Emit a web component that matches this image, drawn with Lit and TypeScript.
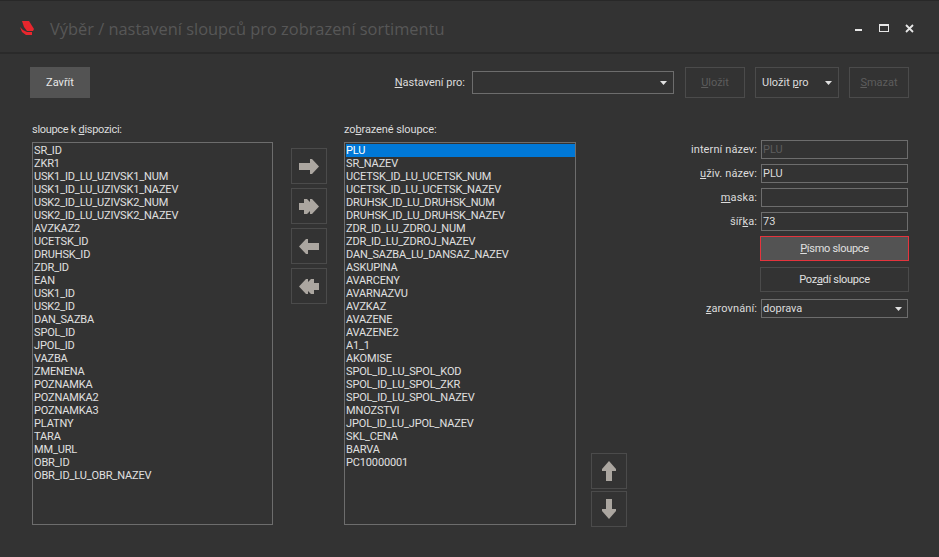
import { LitElement, html, css, svg } from "lit";
import { customElement } from "lit/decorators.js";

const LEFT = ["SR_ID","ZKR1","USK1_ID_LU_UZIVSK1_NUM","USK1_ID_LU_UZIVSK1_NAZEV","USK2_ID_LU_UZIVSK2_NUM","USK2_ID_LU_UZIVSK2_NAZEV","AVZKAZ2","UCETSK_ID","DRUHSK_ID","ZDR_ID","EAN","USK1_ID","USK2_ID","DAN_SAZBA","SPOL_ID","JPOL_ID","VAZBA","ZMENENA","POZNAMKA","POZNAMKA2","POZNAMKA3","PLATNY","TARA","MM_URL","OBR_ID","OBR_ID_LU_OBR_NAZEV"];
const RIGHT = ["PLU","SR_NAZEV","UCETSK_ID_LU_UCETSK_NUM","UCETSK_ID_LU_UCETSK_NAZEV","DRUHSK_ID_LU_DRUHSK_NUM","DRUHSK_ID_LU_DRUHSK_NAZEV","ZDR_ID_LU_ZDROJ_NUM","ZDR_ID_LU_ZDROJ_NAZEV","DAN_SAZBA_LU_DANSAZ_NAZEV","ASKUPINA","AVARCENY","AVARNAZVU","AVZKAZ","AVAZENE","AVAZENE2","A1_1","AKOMISE","SPOL_ID_LU_SPOL_KOD","SPOL_ID_LU_SPOL_ZKR","SPOL_ID_LU_SPOL_NAZEV","MNOZSTVI","JPOL_ID_LU_JPOL_NAZEV","SKL_CENA","BARVA","PC10000001"];

const icon = (w: number, h: number, pts: string[]) => html`<svg width=${w} height=${h} viewBox="0 0 ${w} ${h}">${pts.map((p) => svg`<polygon points=${p} fill="#aba6a0"></polygon>`)}</svg>`;
const ICONS = {
  right: icon(20, 15, ["0,4 11,4 11,0 13,0 20,7.5 13,15 11,15 11,11 0,11"]),
  rright: icon(20, 15, ["0,4 5,4 5,0 8,0 11,3 11,0 13,0 20,7.5 13,15 11,15 11,12 8,15 5,15 5,11 0,11"]),
  left: icon(20, 15, ["20,4 9,4 9,0 7,0 0,7.5 7,15 9,15 9,11 20,11"]),
  lleft: icon(20, 15, ["20,4 15,4 15,0 12,0 9,3 9,0 7,0 0,7.5 7,15 9,15 9,12 12,15 15,15 15,11 20,11"]),
  up: icon(14, 20, ["7,0 14,8 14,10 10,10 10,20 4,20 4,10 0,10 0,8"]),
  down: icon(14, 20, ["7,20 14,12 14,10 10,10 10,0 4,0 4,10 0,10 0,12"]),
};
const caret = html`<svg class="caret" width="7" height="4" viewBox="0 0 7 4"><polygon points="0,0 7,0 3.5,4" fill="#e0e0e0"></polygon></svg>`;

@customElement("app-root")
export class AppRoot extends LitElement {
  static styles = css`
    :host { display: block; width: 939px; height: 557px; overflow: hidden; background: #333; color: #dcdcdc; font: 11px/13px Roboto, "Noto Sans", sans-serif; box-sizing: border-box; }
    * { box-sizing: border-box; }
    u { text-underline-offset: 1px; }
    .title { height: 54px; border-top: 1px solid #282828; border-bottom: 2px solid #2a2a2a; display: flex; align-items: center; padding: 0 25px 0 20px; }
    .logo { margin-right: 16px; margin-top: 2px; }
    .caption { flex: 1; font: 16.4px/24px "Open Sans", sans-serif; color: #575757; padding-top: 4px; }
    .win { display: flex; align-items: center; gap: 16px; height: 12px; padding-top: 3px; }
    .toolbar { display: flex; align-items: center; height: 31px; margin: 13px 30px 0; }
    .btn { height: 31px; display: flex; align-items: center; justify-content: center; border: 1px solid #4b4b4b; }
    .close { width: 60px; background: #535353; border: 0; color: #e8e8e8; margin-right: auto; }
    .off { color: #5d5d5d; }
    .cfg { margin-right: 7px; }
    .combo { width: 202px; height: 23px; border: 1px solid #6d6d6d; display: flex; align-items: center; justify-content: flex-end; padding-right: 6px; margin-right: 11px; }
    .save { width: 60px; margin-right: 10px; }
    .savefor { width: 84px; margin-right: 10px; justify-content: space-between; padding: 0 6px; }
    .del { width: 60px; }
    .main { display: flex; margin: 19px 0 0 32px; align-items: flex-start; }
    .col { display: flex; flex-direction: column; }
    .col > label { height: 25px; line-height: 26px; letter-spacing: -0.1px; }
    .col > label.tight { letter-spacing: -0.3px; }
    .list { height: 383px; border: 1px solid #6d6d6d; padding: 1px 0 1px 1px; overflow: hidden; color: #e0e0e0; letter-spacing: -0.15px; }
    .list div { height: 13px; padding-left: 0; white-space: nowrap; }
    .list .sel { background: #0078d7; color: #fff; }
    .l1 { width: 241px; }
    .l2 { width: 232px; }
    .arrows { display: flex; flex-direction: column; gap: 4px; margin: 31px 17px 0 18px; }
    .ib { width: 36px; height: 36px; border: 1px solid #4b4b4b; display: flex; align-items: center; justify-content: center; }
    .ud { display: flex; flex-direction: column; gap: 2px; margin: 336px 0 0 15px; }
    .form { display: grid; grid-template-columns: 69px 149px; column-gap: 3px; margin: 23px 0 0 61px; align-items: center; }
    .form label { text-align: right; white-space: nowrap; justify-self: end; margin-bottom: 5px; letter-spacing: 0.1px; }
    .inp { height: 19px; width: 147px; margin: 0 0 5px 1px; border: 1px solid #6d6d6d; padding-left: 1px; line-height: 16px; display: flex; align-items: center; }
    .form .btn { grid-column: 2; width: 149px; height: 25px; color: #e0e0e0; letter-spacing: -0.3px; }
    .primary { background: #535353; border: 1px solid #e5343d !important; margin: 0 0 6px 0; }
    .sec { margin-bottom: 7px; }
    .drop { justify-content: space-between; padding-right: 5px; margin-bottom: 0; }
    .last { margin-bottom: 0 !important; }
  `;

  private list(items: string[], cls: string, sel = -1) {
    return html`<div class="list ${cls}">${items.map((t, i) => html`<div class=${i === sel ? "sel" : ""}>${t}</div>`)}</div>`;
  }

  render() {
    return html`
      <div class="title">
        <svg class="logo" width="14" height="14" viewBox="0 0 14 14">
          <polygon points="2,0 9,0 14,8 13,10 7,10 4,6" fill="#e8262d"></polygon>
          <polygon points="0,6 3,9 7,11 12,11 12,14 6,14 2,11" fill="#e8262d"></polygon>
        </svg>
        <div class="caption">Výběr / nastavení sloupců pro zobrazení sortimentu</div>
        <div class="win">
          <svg width="8" height="8" viewBox="0 0 8 8"><rect x="0" y="5" width="7" height="2" fill="#e6e6e6"></rect></svg>
          <svg width="10" height="8" viewBox="0 0 10 8"><rect x=".5" y=".5" width="9" height="7" fill="none" stroke="#e6e6e6"></rect><rect x="0" y="0" width="10" height="2" fill="#e6e6e6"></rect></svg>
          <svg width="9" height="9" viewBox="0 0 9 9"><path d="M1 1 L8 8 M8 1 L1 8" stroke="#e6e6e6" stroke-width="1.8" fill="none"></path></svg>
        </div>
      </div>
      <div class="toolbar">
        <div class="btn close">Zavřít</div>
        <span class="cfg"><u>N</u>astavení pro:</span>
        <div class="combo">${caret}</div>
        <div class="btn save off"><span><u>U</u>ložit</span></div>
        <div class="btn savefor"><span>Uložit <u>p</u>ro</span>${caret}</div>
        <div class="btn del off"><span><u>S</u>mazat</span></div>
      </div>
      <div class="main">
        <div class="col">
          <label class="tight">sloupce k <u>d</u>ispozici:</label>
          ${this.list(LEFT, "l1")}
        </div>
        <div class="arrows">
          <div class="ib">${ICONS.right}</div>
          <div class="ib">${ICONS.rright}</div>
          <div class="ib">${ICONS.left}</div>
          <div class="ib">${ICONS.lleft}</div>
        </div>
        <div class="col">
          <label>zo<u>b</u>razené sloupce:</label>
          ${this.list(RIGHT, "l2", 0)}
        </div>
        <div class="ud">
          <div class="ib">${ICONS.up}</div>
          <div class="ib">${ICONS.down}</div>
        </div>
        <div class="form">
          <label>interní název:</label><div class="inp off">PLU</div>
          <label><u>u</u>živ. název:</label><div class="inp">PLU</div>
          <label><u>m</u>aska:</label><div class="inp"></div>
          <label>šíř<u>k</u>a:</label><div class="inp">73</div>
          <div class="btn primary"><span><u>P</u>ísmo sloupce</span></div>
          <div class="btn sec"><span>Poz<u>a</u>dí sloupce</span></div>
          <label class="last"><u>z</u>arovnání:</label><div class="inp drop"><span>doprava</span>${caret}</div>
        </div>
      </div>
    `;
  }
}
